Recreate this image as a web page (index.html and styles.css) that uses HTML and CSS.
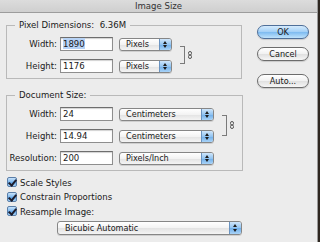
FILE: index.html
```html
<!DOCTYPE html>
<html>
<head>
<meta charset="utf-8">
<link rel="stylesheet" href="styles.css">
</head>
<body>
<div class="window">
  <div class="titlebar">Image Size</div>
  <div class="content">
    <div class="left">
      <fieldset class="group pixel">
        <legend>Pixel Dimensions:&nbsp; 6.36M</legend>
        <div class="grid">
          <label class="lbl">Width:</label>
          <div class="field"><span class="sel-text">1890</span></div>
          <div class="popup small"><span>Pixels</span><i class="arrows"></i></div>
          <div class="link">
            <span class="bracket"></span>
            <svg class="chain" width="4" height="8" viewBox="0 0 4 8"><rect x="0.5" y="0.5" width="3" height="3.5" rx="1.5" fill="none" stroke="#555" stroke-width="1"/><rect x="0.5" y="4" width="3" height="3.5" rx="1.5" fill="none" stroke="#555" stroke-width="1"/></svg>
          </div>
          <label class="lbl">Height:</label>
          <div class="field">1176</div>
          <div class="popup small"><span>Pixels</span><i class="arrows"></i></div>
        </div>
      </fieldset>
      <fieldset class="group doc">
        <legend>Document Size:</legend>
        <div class="grid">
          <label class="lbl">Width:</label>
          <div class="field">24</div>
          <div class="popup wide"><span>Centimeters</span><i class="arrows"></i></div>
          <div class="link">
            <span class="bracket"></span>
            <svg class="chain" width="4" height="8" viewBox="0 0 4 8"><rect x="0.5" y="0.5" width="3" height="3.5" rx="1.5" fill="none" stroke="#555" stroke-width="1"/><rect x="0.5" y="4" width="3" height="3.5" rx="1.5" fill="none" stroke="#555" stroke-width="1"/></svg>
          </div>
          <label class="lbl">Height:</label>
          <div class="field">14.94</div>
          <div class="popup wide"><span>Centimeters</span><i class="arrows"></i></div>
          <label class="lbl">Resolution:</label>
          <div class="field">200</div>
          <div class="popup wide"><span>Pixels/Inch</span><i class="arrows"></i></div>
        </div>
      </fieldset>
      <div class="checks">
        <div class="check"><span class="box"></span>Scale Styles</div>
        <div class="check"><span class="box"></span>Constrain Proportions</div>
        <div class="check"><span class="box"></span>Resample Image:</div>
      </div>
      <div class="popup resample"><span>Bicubic Automatic</span><i class="arrows"></i></div>
    </div>
    <div class="right">
      <div class="btn ok">OK</div>
      <div class="btn">Cancel</div>
      <div class="btn auto">Auto...</div>
    </div>
  </div>
</div>
</body>
</html>
```
FILE: styles.css
```css
* { box-sizing: border-box; }
html, body { margin: 0; padding: 0; }
body {
  width: 320px;
  height: 242px;
  overflow: hidden;
  background: #2e2720;
  font-family: "DejaVu Sans Condensed", "DejaVu Sans", sans-serif;
  font-size: 9.5px;
  color: #1a1a1a;
}
.window {
  width: 318px;
  height: 242px;
  background: #ececec;
  border-right: 1px solid #9a9a9a;
}
.titlebar {
  height: 13px;
  line-height: 11px;
  text-align: center;
  font-size: 9.5px;
  color: #333;
  background: linear-gradient(#dcdcdc, #cfcfcf);
  border-bottom: 1px solid #9c9c9c;
}
.content {
  display: flex;
  padding-left: 6px;
}
.left {
  width: 237px;
  display: flex;
  flex-direction: column;
}
.group {
  margin: 0;
  padding: 6px 0 5px 0;
  border: 1px solid #b9b9b9;
  min-width: 0;
}
.group legend {
  margin-left: 8px;
  padding: 0 4px;
  line-height: 12px;
  font-size: 9.5px;
  color: #1a1a1a;
}
.pixel { margin-top: 6px; width: 236px; }
.doc { margin-top: 10px; width: 237px; }
.grid {
  display: grid;
  grid-template-columns: 51px 53px auto 1fr;
  grid-auto-rows: 14px;
  row-gap: 8px;
  align-items: center;
}
.lbl {
  text-align: right;
  padding-right: 1px;
  line-height: 14px;
}
.field {
  margin-left: 2px;
  height: 14px;
  width: 53px;
  background: #fff;
  border: 1px solid #8e8e8e;
  border-top-color: #6e6e6e;
  box-shadow: inset 0 1px 1px rgba(0,0,0,0.18);
  padding-left: 2px;
  line-height: 12px;
  font-size: 9.5px;
}
.sel-text { background: #b7d3f6; }
.popup {
  position: relative;
  height: 13px;
  margin-left: 8px;
  border: 1px solid #868686;
  border-radius: 3px;
  background: linear-gradient(#ffffff, #f3f3f3 50%, #e2e2e2 51%, #f4f4f4);
  box-shadow: 0 1px 0 rgba(0,0,0,0.12);
  line-height: 11px;
  padding-left: 6px;
  font-size: 9px;
  overflow: hidden;
}
.popup.small { width: 53px; }
.popup.wide { width: 95px; }
.arrows {
  position: absolute;
  right: 0;
  top: 0;
  bottom: 0;
  width: 12px;
  background: linear-gradient(#cfe6fb, #92c4f1 50%, #6eaeea 51%, #a9d3f7);
  border-left: 1px solid #6a93c0;
}
.arrows::before, .arrows::after {
  content: "";
  position: absolute;
  left: 3px;
  border-left: 2px solid transparent;
  border-right: 2px solid transparent;
}
.arrows::before { top: 2px; border-bottom: 3px solid #1d1d1d; }
.arrows::after { bottom: 2px; border-top: 3px solid #1d1d1d; }
.link {
  grid-row: 1 / span 2;
  grid-column: 4;
  display: flex;
  align-items: center;
  margin-left: 8px;
  height: 100%;
}
.bracket {
  width: 5px;
  height: 18px;
  border: 1px solid #7a7a7a;
  border-left: none;
}
.chain { margin-left: 3px; }
.pixel .bracket { height: 18px; }
.doc .bracket { height: 21px; }
.checks {
  margin-top: 4px;
  display: flex;
  flex-direction: column;
}
.check {
  display: flex;
  align-items: center;
  height: 14.5px;
  font-size: 9.5px;
  padding-left: 1px;
}
.box {
  width: 10px;
  height: 10px;
  margin-right: 3px;
  border: 1px solid #5a7ea8;
  border-radius: 2px;
  background: linear-gradient(#c8e2fa, #7db8ef 50%, #5ea3e6 51%, #a6d1f6);
  position: relative;
}
.box::after {
  content: "";
  position: absolute;
  left: 2px;
  top: 0px;
  width: 3px;
  height: 6px;
  border-right: 2px solid #1c1c2c;
  border-bottom: 2px solid #1c1c2c;
  transform: rotate(40deg);
}
.popup.resample {
  margin-left: 51px;
  margin-top: 2px;
  width: 185px;
  height: 14px;
  line-height: 12px;
  padding-left: 7px;
}
.right {
  margin-left: 14px;
  padding-top: 12px;
  display: flex;
  flex-direction: column;
}
.btn {
  width: 52px;
  height: 14px;
  border: 1px solid #6c6c6c;
  border-radius: 7px;
  background: linear-gradient(#ffffff, #f1f1f1 50%, #e0e0e0 51%, #f6f6f6);
  text-align: center;
  line-height: 12px;
  font-size: 9px;
  box-shadow: 0 1px 1px rgba(0,0,0,0.15);
}
.btn.ok {
  background: linear-gradient(#d5ebfd, #a2cff6 50%, #7cbaf0 51%, #bfe2fb);
  border-color: #4f6f99;
  margin-bottom: 8px;
}
.btn.auto { margin-top: 13px; }
```
